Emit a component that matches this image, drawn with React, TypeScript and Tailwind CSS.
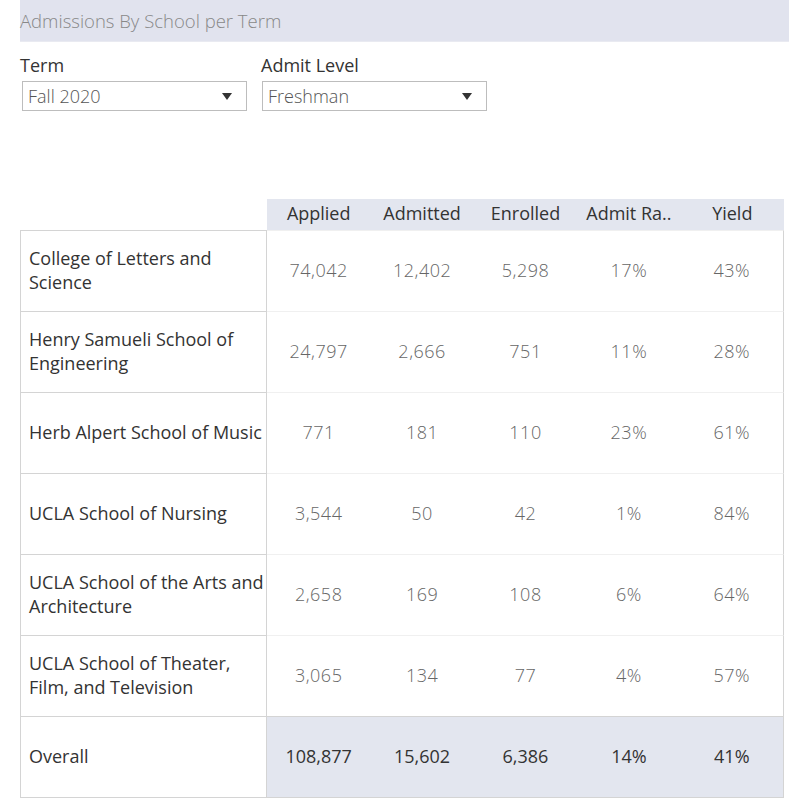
import React from "react";

const rows = [
  { name: "College of Letters and Science", v: ["74,042", "12,402", "5,298", "17%", "43%"] },
  { name: "Henry Samueli School of Engineering", v: ["24,797", "2,666", "751", "11%", "28%"] },
  { name: "Herb Alpert School of Music", v: ["771", "181", "110", "23%", "61%"] },
  { name: "UCLA School of Nursing", v: ["3,544", "50", "42", "1%", "84%"] },
  { name: "UCLA School of the Arts and Architecture", v: ["2,658", "169", "108", "6%", "64%"] },
  { name: "UCLA School of Theater, Film, and Television", v: ["3,065", "134", "77", "4%", "57%"] },
];

const headers = ["Applied", "Admitted", "Enrolled", "Admit Ra..", "Yield"];

function Select({ value }: { value: string }) {
  return (
    <div className="w-[225px] h-[30px] border border-[#bdbdbd] flex items-center justify-between pl-[5px] pr-[14px] text-[18px] text-[#555] font-light">
      <span>{value}</span>
      <svg width="10" height="7" viewBox="0 0 10 7">
        <path d="M0 0 L10 0 L5 7 Z" fill="#333" />
      </svg>
    </div>
  );
}

export default function App() {
  return (
    <div
      className="w-[789px] h-[801px] bg-white overflow-hidden pl-[20px]"
      style={{ fontFamily: '"Open Sans", "Noto Sans", sans-serif' }}
    >
      <div className="h-[42px] bg-[#e1e3ee] border-b border-[#e9eaf1] flex items-center text-[18.5px] text-[#888] font-light">
        Admissions By School per Term
      </div>
      <div className="flex gap-[15px] mt-[11px]">
        <div className="flex flex-col">
          <div className="text-[18px] text-[#333] leading-[24px] mb-[4px]">Term</div>
          <div className="pl-[2px]"><Select value="Fall 2020" /></div>
        </div>
        <div className="flex flex-col">
          <div className="text-[18px] text-[#333] leading-[24px] mb-[4px] -ml-[1px]">Admit Level</div>
          <div><Select value="Freshman" /></div>
        </div>
      </div>

      <div className="mt-[88px] w-[764px]">
        <div className="grid grid-cols-[247px_repeat(5,1fr)] h-[31px]">
          <div />
          {headers.map((h) => (
            <div key={h} className="bg-[#e3e6ef] flex items-center justify-center text-[18px] text-[#333] pb-[2px]">
              {h}
            </div>
          ))}
        </div>
        {rows.map((r) => (
          <div key={r.name} className="grid grid-cols-[247px_repeat(5,1fr)] h-[81px]">
            <div className="border-t border-l border-r border-[#d4d4d4] flex items-center pl-[8px] pr-[2px] text-[18px] leading-[24px] text-[#333] pb-[2px]">
              {r.name}
            </div>
            {r.v.map((v, i) => (
              <div
                key={i}
                className={`border-t border-[#f0f0f0] flex items-center justify-center text-[18px] tracking-[0.5px] text-[#666] font-light pb-[2px] ${i === 4 ? "border-r border-r-[#d4d4d4]" : ""}`}
              >
                {v}
              </div>
            ))}
          </div>
        ))}
        <div className="grid grid-cols-[247px_repeat(5,1fr)] h-[82px] border-b border-[#d4d4d4]">
          <div className="border-t border-l border-r border-[#d4d4d4] flex items-center pl-[8px] text-[18px] text-[#333] pb-[2px]">
            Overall
          </div>
          {["108,877", "15,602", "6,386", "14%", "41%"].map((v, i) => (
            <div
              key={i}
              className={`bg-[#e3e6ef] border-t border-[#d4d4d4] flex items-center justify-center text-[18px] text-[#333] pb-[2px] ${i === 4 ? "border-r border-r-[#d4d4d4]" : ""}`}
            >
              {v}
            </div>
          ))}
        </div>
      </div>
    </div>
  );
}
